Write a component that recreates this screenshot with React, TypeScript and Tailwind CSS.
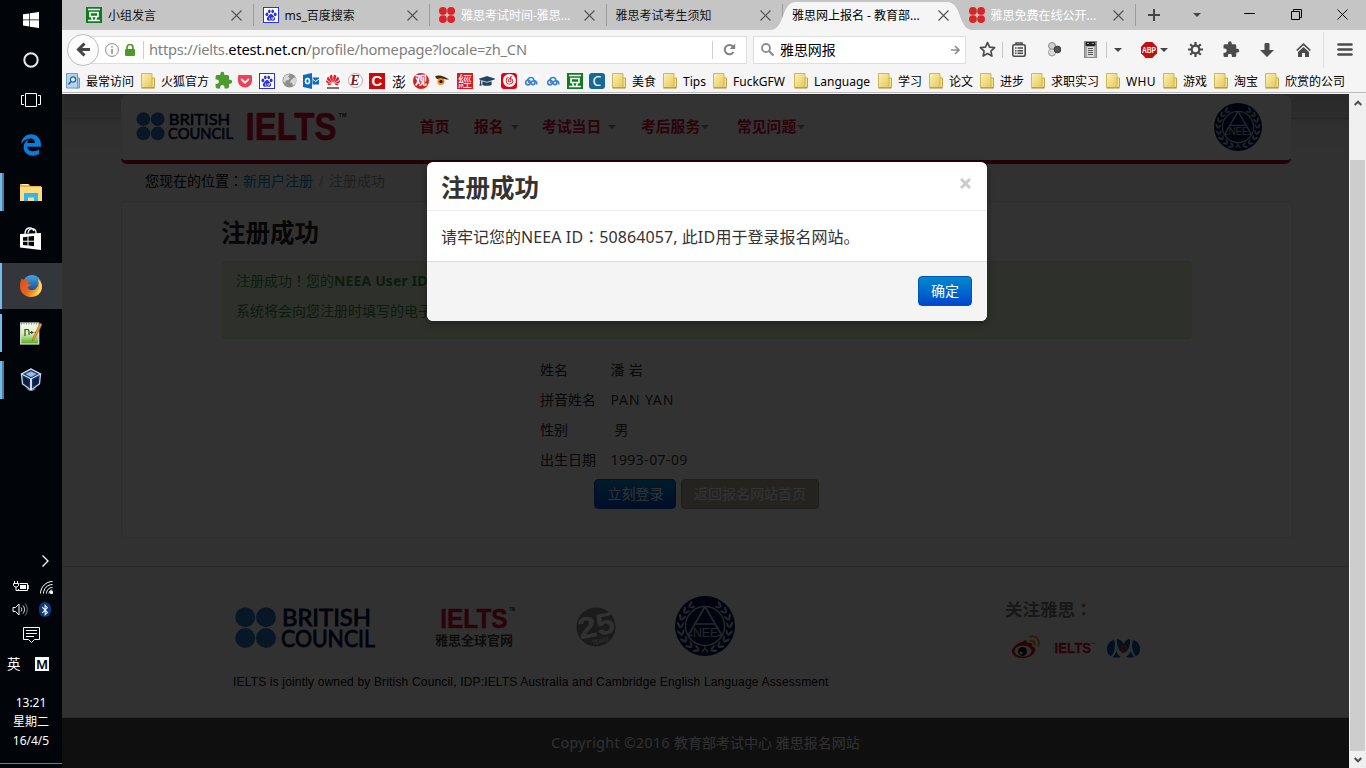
import React from "react";
import { FaEdgeLegacy, FaGetPocket, FaBluetoothB, FaGraduationCap } from "react-icons/fa";
import { MdExtension } from "react-icons/md";
import { SiHuawei, SiNeteasecloudmusic } from "react-icons/si";

const ui = "font-['Noto_Sans','Noto_Sans_CJK_SC',sans-serif]";

/* ---------- shared pieces ---------- */

const Wide = ({ children }: { children: React.ReactNode }) => (
  <span className="font-['Noto_Sans_CJK_TC',sans-serif]" lang="zh-TW">{children}</span>
);

const Cross = () => (
  <svg className="size-[11px]" viewBox="0 0 11 11" fill="none" stroke="#555" strokeWidth="1.2">
    <path d="M.5.5l10 10M10.500.5l-10 10" />
  </svg>
);

const Caret = ({ className = "text-[#444]" }: { className?: string }) => (
  <svg className={`h-1 w-2 ${className}`} viewBox="0 0 8 4"><path d="M0 0h8L4 4z" fill="currentColor" /></svg>
);

const Douban = () => (
  <svg className="size-4" viewBox="0 0 16 16">
    <rect width="16" height="16" fill="#0b7d1f" />
    <path d="M2 2.500h12M4 5.500h8v4H4zM2 13.500h12M5.500 10l1 3M10.500 10l-1 3" stroke="#fff" strokeWidth="1.6" fill="none" />
  </svg>
);

const Baidu = () => (
  <svg className="size-4" viewBox="0 0 16 16">
    <rect x=".5" y=".5" width="15" height="15" fill="#fff" stroke="#2b32e0" />
    <g fill="#2b32e0">
      <ellipse cx="3.900" cy="7.300" rx="1.400" ry="1.900" />
      <ellipse cx="6.300" cy="4.300" rx="1.300" ry="1.900" />
      <ellipse cx="9.700" cy="4.300" rx="1.300" ry="1.900" />
      <ellipse cx="12.200" cy="7.300" rx="1.400" ry="1.900" />
      <path d="M8 7c1.500 0 2 1.600 3.200 2.700 1.800 1.700.8 4.300-1.200 4-1.300-.2-2.700-.2-4 0-2 .3-3-2.300-1.200-4C6 8.600 6.500 7 8 7z" />
    </g>
    <path d="M6.500 10.500v1.800h1M9 10v2.200h1.500V10" stroke="#fff" strokeWidth=".7" fill="none" />
  </svg>
);

const Clover = () => (
  <svg className="size-4" viewBox="0 0 16 16" fill="#d9242a">
    <circle cx="3.900" cy="3.900" r="3.900" /><circle cx="12.100" cy="3.900" r="3.900" />
    <circle cx="3.900" cy="12.100" r="3.900" /><circle cx="12.100" cy="12.100" r="3.900" />
  </svg>
);

const Seal = ({ className }: { className: string }) => (
  <svg className={className} viewBox="0 0 60 60">
    <circle cx="30" cy="30" r="30" fill="#03154d" />
    <circle cx="30" cy="30" r="19.500" fill="none" stroke="#b9c0d4" strokeWidth="1.500" />
    <path d="M30 10.500L13.500 39M30 10.500L46.500 39M20.500 28h19" fill="none" stroke="#b9c0d4" strokeWidth="1.700" />
    <path d="M13.500 39.500h4M43 39.500h3.500" fill="none" stroke="#b9c0d4" strokeWidth="1.300" />
    <text x="18" y="40.500" textLength="25" lengthAdjust="spacingAndGlyphs" fontSize="13" fill="#b9c0d4" fontFamily="Liberation Sans">NEE</text>
    <g fill="#b9c0d4">
      {[34, 52, 70, 88, 106, 124, 142, 160].map((a) => (
        <g key={a}>
          <ellipse cx="30" cy="3.800" rx="3.500" ry="1.200" transform={`rotate(${a} 30 30) rotate(28 30 3.800)`} />
          <ellipse cx="30" cy="7.300" rx="3" ry="1" transform={`rotate(${a} 30 30) rotate(-28 30 7.300)`} />
          <ellipse cx="30" cy="3.800" rx="3.500" ry="1.200" transform={`rotate(${-a} 30 30) rotate(-28 30 3.800)`} />
          <ellipse cx="30" cy="7.300" rx="3" ry="1" transform={`rotate(${-a} 30 30) rotate(28 30 7.300)`} />
        </g>
      ))}
    </g>
    <path d="M27 56l3-4 3 4M30 52v-2" stroke="#b9c0d4" strokeWidth="1.300" fill="none" />
  </svg>
);

const BritishCouncil = ({ className }: { className: string }) => (
  <svg className={`overflow-visible ${className}`} viewBox="0 0 141 42">
    <g fill="#2b76bd">
      <circle cx="10.200" cy="10.200" r="10" /><circle cx="31" cy="10.200" r="10" />
      <circle cx="10.200" cy="31" r="10" /><circle cx="31" cy="31" r="10" />
    </g>
    <g fill="#001047" stroke="#001047" strokeWidth=".9" fontFamily="Lato" fontWeight="400" fontSize="23.500">
      <text x="47" y="19" textLength="89" lengthAdjust="spacingAndGlyphs">BRITISH</text>
      <text x="46" y="39.500" textLength="94" lengthAdjust="spacingAndGlyphs">COUNCIL</text>
    </g>
  </svg>
);

const Ielts = ({ className }: { className: string }) => (
  <svg className={`overflow-visible ${className}`} viewBox="0 0 100 29">
    <text x="-1" y="27.500" textLength="91" lengthAdjust="spacingAndGlyphs" fontFamily="Liberation Sans" fontWeight="700" fontSize="38" fill="#d90d34" stroke="#d90d34" strokeWidth=".7">IELTS</text>
    <text x="92" y="5" textLength="8" lengthAdjust="spacingAndGlyphs" fontFamily="Liberation Sans" fontWeight="700" fontSize="6" fill="#333">TM</text>
  </svg>
);

/* ---------- task bar ---------- */

const Explorer = () => (
  <svg className="h-[19px] w-[22px]" viewBox="0 0 22 19">
    <path d="M0 1h9l1 2h11v15H0z" fill="#e9b83b" />
    <path d="M0 4h22v14H0z" fill="#fbdc82" />
    <path d="M2 1.500h6" stroke="#fff6cf" />
    <path d="M4 10h14v8h-4v-3.500H8V18H4z" fill="#30b6e8" />
  </svg>
);

const Store = () => (
  <svg className="h-[24px] w-[22px]" viewBox="0 0 22 24">
    <path d="M5 7c0-7 7-8 9-3M8 6c1-6 9-6 8 1" fill="none" stroke="#fff" strokeWidth="1.300" />
    <path d="M0 7l21-1v17L0 20.500z" fill="#fff" />
    <path d="M3 10.200l4.500-.5v4H3zM8.500 9.600l5.500-.6v4.700H8.500zM3 14.700h4.500v3.700L3 17.900zM8.500 14.700H14v4.500l-5.500-.7z" fill="#02060c" />
  </svg>
);

const Firefox = () => (
  <svg className="size-6" viewBox="0 0 24 24">
    <defs>
      <linearGradient id="fx" x1="0" y1="0" x2="1" y2=".6"><stop offset="0" stopColor="#d9481d" /><stop offset=".6" stopColor="#e96a22" /><stop offset="1" stopColor="#fcd34a" /></linearGradient>
      <linearGradient id="gl" x1="0" y1="0" x2="0" y2="1"><stop offset="0" stopColor="#3fa8e8" /><stop offset="1" stopColor="#123a80" /></linearGradient>
    </defs>
    <circle cx="13" cy="10.500" r="9.500" fill="url(#gl)" />
    <path d="M2.500 4.500c1 1 2 1.200 3 1 1.500-.5 3-.2 4 .8L8.500 8.500c0 1.500 1.500 1.700 3.500 1.700-1 2-2.500 1.500-3.500 3.300 1 3 6 3.500 8.500 1 2.500-2.500 3-6 2-9.500 3 2 4 5 4 8C23 19 18 23 12 23S1 18.500 1 12.500c0-3 .5-5.500 1.500-8z" fill="url(#fx)" />
    <path d="M19 5c4 3.500 4.500 7.500 2.500 11.500C20 19 17 20.500 15 20.500c4.500-2.500 6.500-8 4-15.500z" fill="#fde06a" opacity=".8" />
  </svg>
);

const NotepadPP = () => (
  <svg className="h-6 w-[22px]" viewBox="0 0 22 24">
    <defs><linearGradient id="np" x1="0" y1="0" x2="0" y2="1"><stop offset="0" stopColor="#f7fbf3" /><stop offset=".5" stopColor="#d8efb5" /><stop offset="1" stopColor="#4cae1c" /></linearGradient></defs>
    <rect x=".7" y="2" width="18" height="21" fill="url(#np)" stroke="#dfe4df" strokeWidth="1.200" />
    <path d="M1 2.500h18" stroke="#8a8f8a" strokeDasharray="1 1.500" strokeWidth="2" />
    <path d="M5 15V8.500h3l1 1.500v4M10 11.500h3.500M14.500 11.500h3M11.700 10v3" stroke="#3b4538" strokeWidth="1.200" fill="none" />
    <path d="M20 2L13 17l-1 3 2.500-2L22 3.500z" fill="#f0a22b" stroke="#a35b16" strokeWidth=".6" />
  </svg>
);

const VBox = () => (
  <svg className="h-6 w-[22px]" viewBox="0 0 22 24">
    <path d="M11 1l9.500 5-1 10L11 22l-8.500-6-1-10z" fill="#16305f" stroke="#c4d6ea" strokeWidth="1.300" />
    <path d="M1.500 6L11 11l9.500-5L11 1z" fill="#24467c" stroke="#dbe7f3" strokeWidth="1.100" />
    <path d="M5.500 6L11 9l5.500-3L11 3.500z" fill="#9dbbdb" />
    <path d="M11 11v11" stroke="#e9f1f8" strokeWidth="1.800" />
    <path d="M3.500 9l5 3v6l-4.500-3zM18.500 9l-5 3v6l4.500-3z" fill="#0a1e42" />
    <path d="M6 20c3 4 7 4 10 0l-5 2.500z" fill="#94abc4" />
  </svg>
);

const TaskItem = ({ children, mark, active }: { children: React.ReactNode; mark?: "one" | "many"; active?: boolean }) => (
  <div className={`mb-px flex h-[46px] items-center ${active ? "bg-[#33363a]" : ""}`}>
    <div className={`flex w-1 ${active ? "h-full" : "h-[38px]"}`}>
      {(mark || active) && <span className="h-full w-[2px] bg-[#76b9ed]" />}
      {mark === "many" && <span className="h-full w-[2px] bg-[#4d7ba3]" />}
    </div>
    <div className="flex flex-1 justify-center pr-[5px]">{children}</div>
  </div>
);

const Taskbar = () => (
  <aside className="flex h-full w-[62px] shrink-0 flex-col bg-[#010409] text-white">
    <div className="flex h-10 items-center justify-center">
      <svg className="size-4" viewBox="0 0 16 16" fill="#fff"><path d="M0 2.300L6.300 1.400v6.100H0zM7 1.300L16 0v7.500H7zM0 8.300h6.300v6.100L0 13.500zM7 8.300h9V16l-9-1.300z" /></svg>
    </div>
    <div className="flex h-10 items-center justify-center">
      <svg className="size-4" viewBox="0 0 16 16"><circle cx="8" cy="8" r="6.700" fill="none" stroke="#e9e9e9" strokeWidth="2" /></svg>
    </div>
    <div className="mb-[2px] flex h-10 items-center justify-center">
      <svg className="h-[14px] w-5" viewBox="0 0 20 14" fill="none" stroke="#fff"><path d="M4.500.5h11v13h-11zM3 2.500H.5v9H3M17 2.500h2.500v9H17" /></svg>
    </div>
    <TaskItem><FaEdgeLegacy className="size-[22px] text-[#0b7bdc]" /></TaskItem>
    <TaskItem mark="many"><Explorer /></TaskItem>
    <TaskItem><Store /></TaskItem>
    <TaskItem active><Firefox /></TaskItem>
    <TaskItem mark="one"><NotepadPP /></TaskItem>
    <TaskItem mark="many"><VBox /></TaskItem>
    <div className="mt-auto flex h-[22px] items-center justify-end pr-3">
      <svg className="h-3 w-[9px]" viewBox="0 0 9 12" fill="none" stroke="#fff" strokeWidth="1.300"><path d="M1.500.5L7 6l-5.500 5.500" /></svg>
    </div>
    <div className="mt-1 flex h-[22px] items-center justify-between pl-[13px] pr-[9px]">
      <svg className="h-3 w-4" viewBox="0 0 16 12" fill="none" stroke="#fff"><path d="M6.500 2.500h8v7h-9V8" /><path d="M14.500 4.500h1.200v3h-1.200" /><path d="M7 4h6v4H7z" fill="#fff" stroke="none" /><path d="M1.500 0v2M4.500 0v2M.5 2.500h5v2L4 6H2L.5 4.500zM3 6v3.500h3" /></svg>
      <svg className="size-[13px]" viewBox="0 0 13 13" fill="none" stroke="#fff"><path d="M.5 12.500C.5 6 6 .5 12.500.5M3.500 12.500c0-5 4-9 9-9M6.500 12.500c0-3.500 2.500-6 6-6M9 12.500c0-2 1.500-3.500 3.500-3.500" /><path d="M10.500 10.500h2v2h-2z" fill="#fff" /></svg>
    </div>
    <div className="flex h-[23px] items-center justify-between pl-3 pr-[11px]">
      <svg className="h-[13px] w-4" viewBox="0 0 16 13" fill="none" stroke="#fff"><path d="M1 4.500h2.500L7 1v11L3.500 8.500H1z" /><path d="M9 4.500c1 1.200 1 2.800 0 4M11 2.500c2 2.500 2 5.500 0 8" /><path d="M13 .5c3 3.500 3 8.500 0 12" stroke="#777" /></svg>
      <span className="flex h-[15px] w-3 items-center justify-center rounded-full bg-[#0c3a7c]"><FaBluetoothB className="size-3" /></span>
    </div>
    <div className="mb-1 flex h-[28px] items-center justify-center">
      <svg className="h-4 w-[17px]" viewBox="0 0 17 16" fill="none" stroke="#fff"><path d="M.5.5h16v12h-5l-3 3-3-3h-5zM3 3.500h11M3 6.500h11M3 9.500h8" /></svg>
    </div>
    <div className="flex h-[22px] items-center justify-between pl-[7px] pr-[13px] text-[13.5px] leading-4">
      <span>英</span>
      <span className="flex size-[14px] items-center justify-center bg-white text-[13px] leading-[14px] font-semibold text-black">M</span>
    </div>
    <div className="mt-[18px] flex h-[69px] flex-col text-center text-[12px] leading-[19px]">
      <span>13:21</span><span>星期二</span><span>16/4/5</span>
    </div>
    <div className="mt-px h-[5px] border-t border-[#777]" />
  </aside>
);

/* ---------- browser chrome ---------- */

const Tab = ({ icon, label, light, last }: { icon?: React.ReactNode; label: string; light?: boolean; last?: boolean }) => (
  <div className={`flex h-[30px] w-[176.5px] shrink-0 items-center ${last ? "pl-[9px]" : "pl-[9px]"}`}>
    {icon && <span className="mr-[6px] shrink-0">{icon}</span>}
    <span className={`flex-1 overflow-hidden pt-[2px] text-[12px] leading-5 whitespace-nowrap ${light ? "text-white" : "text-[#111]"}`}>{label}</span>
    <Cross />
    <span className="ml-[11px] h-[22px] w-px bg-[#9c9c9c]" />
  </div>
);

const TabBar = () => (
  <div className="flex h-[30px] shrink-0 items-center bg-[#c5c5c5] pl-[15px]">
    <Tab icon={<Douban />} label="小组发言" />
    <Tab icon={<Baidu />} label="ms_百度搜索" />
    <Tab icon={<Clover />} label="雅思考试时间-雅思..." light />
    <Tab label="雅思考试考生须知" />
    <div className="relative flex h-[30px] w-[176.5px] shrink-0 items-center pr-[10px] pl-[9px]">
      <svg className="absolute top-0 -left-[12px] h-[30px] w-[201px]" viewBox="0 0 201 30">
        <path d="M0 30C14 29 10 2 25 2h151C191 2 187 29 201 30z" fill="#f5f5f5" />
      </svg>
      <span className="relative flex-1 overflow-hidden pt-[2px] text-[12px] leading-5 whitespace-nowrap text-black">雅思网上报名 - 教育部...</span>
      <span className="relative mr-px"><Cross /></span>
    </div>
    <Tab icon={<Clover />} label="雅思免费在线公开..." light last />
    <svg className="ml-3 size-3" viewBox="0 0 12 12" stroke="#444" strokeWidth="2"><path d="M6 0v12M0 6h12" /></svg>
    <span className="ml-[33px]"><Caret /></span>
    <div className="ml-auto flex items-center pr-[18px] pb-[2px]">
      <svg className="h-3 w-[11px]" viewBox="0 0 11 12" stroke="#000"><path d="M0 5.500h11" /></svg>
      <svg className="ml-9 size-[11px]" viewBox="0 0 11 11" stroke="#000" fill="none"><path d="M.5 2.500h8v8h-8zM2.500 2.500v-2h8v8h-2" /></svg>
      <svg className="ml-[35px] size-[11px]" viewBox="0 0 11 11" stroke="#000"><path d="M.5.5l10 10M10.500.5l-10 10" /></svg>
    </div>
  </div>
);

const Slot = ({ w, children }: { w: string; children?: React.ReactNode }) => (
  <span className={`flex shrink-0 items-center justify-center ${w}`}>{children}</span>
);

const NavBar = () => (
  <div className="flex h-[39px] shrink-0 items-center pl-[5px]">
    <span className="relative z-10 flex size-8 shrink-0 items-center justify-center rounded-full border border-[#bdbdbd] bg-[#fcfcfc]">
      <svg className="h-[15px] w-[14px]" viewBox="0 0 14 15" fill="none" stroke="#444" strokeWidth="3"><path d="M14 7.500H3M8.500 1.500l-6 6 6 6" /></svg>
    </span>
    <div className="-ml-4 flex h-7 w-[664px] shrink-0 items-center border border-[#dedede] bg-white pl-[21px]">
      <svg className="size-[14px]" viewBox="0 0 14 14" fill="none" stroke="#8c8c8c"><circle cx="7" cy="7" r="6.400" /><path d="M7 6v5M7 3v1.500" strokeWidth="1.500" /></svg>
      <svg className="ml-[6px] h-3 w-[10px]" viewBox="0 0 10 12"><path d="M2 6V3.500a3 3 0 016 0V6" fill="none" stroke="#4c9b26" strokeWidth="1.700" /><rect y="5" width="10" height="7" rx="1" fill="#4c9b26" /></svg>
      <span className="ml-2 h-[18px] w-px bg-[#cfcfcf]" />
      <span className="ml-[5px] flex-1 pb-px text-[14.67px] leading-5 tracking-[-0.23px] whitespace-nowrap text-[#808080]">https://ielts.<span className="text-black">etest.net.cn</span>/profile/homepage?locale=zh_CN</span>
      <span className="h-[18px] w-px bg-[#cfcfcf]" />
      <Slot w="w-[33px]"><svg className="size-[13px]" viewBox="0 0 13 13"><path d="M10.500 9A4.700 4.700 0 1110 3.500" fill="none" stroke="#808080" strokeWidth="2" /><path d="M12.200.5v5.500H6.700z" fill="#808080" /></svg></Slot>
    </div>
    <div className="ml-[6px] flex h-7 w-[213px] shrink-0 items-center border border-[#dedede] bg-white pl-[7px]">
      <svg className="size-[13px]" viewBox="0 0 13 13" fill="none" stroke="#8c8c8c" strokeWidth="1.800"><circle cx="5" cy="5" r="4" /><path d="M8 8l4.500 4.500" strokeWidth="2.200" /></svg>
      <span className="ml-[6px] flex-1 text-[14px] leading-5 tracking-[-0.1px] text-black">雅思网报</span>
      <svg className="mr-[5px] h-[10px] w-[9px]" viewBox="0 0 9 10" fill="none" stroke="#8c8c8c" strokeWidth="1.600"><path d="M0 5h8M4 1l4 4-4 4" /></svg>
    </div>
    <Slot w="w-9 pl-[6px]"><svg className="size-[17px]" viewBox="0 0 17 17" fill="none" stroke="#4b4b4b" strokeWidth="1.700" strokeLinejoin="round"><path d="M8.500 1.500l2.100 4.600 5 .6-3.700 3.400 1 5-4.400-2.500-4.400 2.500 1-5L1.400 6.700l5-.6z" /></svg></Slot>
    <span className="h-[16px] w-px bg-[#c8c8c8]" />
    <Slot w="w-[31px]"><svg className="h-[15px] w-[14px]" viewBox="0 0 14 15" fill="none" stroke="#4b4b4b" strokeWidth="1.600"><rect x=".8" y="2.800" width="12.400" height="11.400" rx="1.500" /><path d="M4 2.500V1h6v1.500M3 6h1.500M5.500 6H11M3 8.700h1.500M5.500 8.700H11M3 11.300h1.500M5.500 11.300H11" /></svg></Slot>
    <Slot w="w-10"><svg className="h-[15px] w-[14px]" viewBox="0 0 14 15"><circle cx="5" cy="4" r="3.500" fill="#cfcfcf" stroke="#8a8a8a" /><circle cx="5" cy="10.500" r="3.500" fill="#d8d8d8" stroke="#999" /><circle cx="10.500" cy="7.500" r="3.300" fill="#555" stroke="#333" /></svg></Slot>
    <Slot w="w-[32px]"><svg className="h-[17px] w-[13px]" viewBox="0 0 13 17"><rect x=".5" y=".5" width="12" height="16" fill="#aaa" stroke="#888" /><rect x="1.500" y="1" width="10" height="4" rx="1" fill="#222" /><path d="M3 2.500h2M8 2.500h2" stroke="#999" /><rect x="3" y="6" width="7" height="10" fill="#ddd" /><path d="M4 7.500h5M4 9.500h5M4 11.500h5M4 13.500h5" stroke="#555" /></svg></Slot>
    <span className="h-[16px] w-px bg-[#c8c8c8]" />
    <Slot w="w-[22px]"><Caret /></Slot>
    <Slot w="w-[40px]">
      <svg className="size-4" viewBox="0 0 16 16"><path d="M4.700 0h6.600L16 4.700v6.600L11.300 16H4.700L0 11.300V4.700z" fill="#c70d0d" /><text x="1" y="11" textLength="14" lengthAdjust="spacingAndGlyphs" fontFamily="Liberation Sans" fontWeight="700" fontSize="8.500" fill="#fff">ABP</text></svg>
    </Slot>
    <span className="ml-[-9px]"><Caret /></span>
    <Slot w="w-[54px]"><svg className="size-[15px]" viewBox="0 0 15 15" fill="none" stroke="#4b4b4b"><circle cx="7.500" cy="7.500" r="3.800" strokeWidth="2.200" /><path d="M7.500 0v3M7.500 12v3M0 7.500h3M12 7.500h3M2.200 2.200l2.100 2.100M10.700 10.700l2.100 2.100M12.800 2.200l-2.100 2.100M4.300 10.700l-2.100 2.100" strokeWidth="2.200" /></svg></Slot>
    <Slot w="w-[18px]"><MdExtension className="size-[19px] text-[#4b4b4b]" /></Slot>
    <Slot w="w-[54px]"><svg className="size-[14px]" viewBox="0 0 14 14" fill="#4b4b4b"><path d="M4.500 1.200Q4.500 0 5.700 0h2.600Q9.500 0 9.500 1.200V7H14l-7 7-7-7h4.500z" /></svg></Slot>
    <Slot w="w-[18px]"><svg className="h-[14px] w-[15px]" viewBox="0 0 15 14"><path d="M.7 7.500l6.800-6.300 6.800 6.300" fill="none" stroke="#4b4b4b" strokeWidth="1.700" /><path d="M7.500 4L13 9v5H9v-4H6v4H2V9z" fill="#4b4b4b" /></svg></Slot>
    <span className="ml-[11px] h-[36px] w-px bg-[#dcdcdc]" />
    <Slot w="w-[41px]"><svg className="h-[13px] w-4" viewBox="0 0 16 13" stroke="#4b4b4b" strokeWidth="2.600" strokeLinecap="round"><path d="M1.500 1.500h13M1.500 6.500h13M1.500 11.500h13" /></svg></Slot>
  </div>
);

const Folder = () => (
  <svg className="h-4 w-[15px]" viewBox="0 0 15 16">
    <defs><linearGradient id="fo" x1="0" y1="0" x2="1" y2="1"><stop offset="0" stopColor="#fdf3b4" /><stop offset="1" stopColor="#e5c75c" /></linearGradient></defs>
    <path d="M9 5h4.500v9.500H9z" fill="#f3df86" stroke="#c4a648" />
    <path d="M.5.5h10.500v14H.5z" fill="url(#fo)" stroke="#d0b658" />
    <path d="M.5 15h13" stroke="#a58d3f" />
  </svg>
);

const Entry = ({ w, label, tight }: { w: string; label: string; tight?: string }) => (
  <span className={`flex shrink-0 items-center gap-[5px] ${w}`}>
    <Folder />
    <span className={`pt-[2px] text-[12px] leading-4 whitespace-nowrap ${tight ?? ""}`}>{label}</span>
  </span>
);

const Cloud = () => (
  <svg className="size-[14px]" viewBox="0 0 14 14" fill="none" strokeWidth="1.700"><rect width="14" height="14" fill="#fafafa" /><circle cx="4" cy="8.500" r="2.300" stroke="#2f86dd" /><path d="M3.500 6.300c1.500-4 6-3.500 6.500.2 2 .5 3 2 2.500 4" stroke="#2f86dd" /><circle cx="9" cy="8.800" r="1.800" stroke="#2f86dd" /><path d="M4 8.500l2-1.500" stroke="#e24545" /></svg>
);

const Bookmarks = () => (
  <div className="flex h-[24px] shrink-0 items-center border-b border-[#b9b9b9] pl-1 text-black">
    <span className="flex w-[75px] shrink-0 items-center gap-[5px]">
      <svg className="h-4 w-[15px]" viewBox="0 0 15 16"><path d="M9 5h4.500v10H9z" fill="#a9cbe2" stroke="#6c9cbd" /><path d="M.5.5h11v14.500H.5z" fill="#b2d4ec" stroke="#6b9dc2" /><circle cx="7" cy="6.500" r="2.600" fill="#dff0fb" stroke="#2f6590" strokeWidth="1.300" /><path d="M5 8.500L2.500 11.500" stroke="#2f6590" strokeWidth="1.800" /></svg>
      <span className="pt-[2px] text-[12px] leading-4">最常访问</span>
    </span>
    <Entry w="w-[71px]" label="火狐官方" />
    <Slot w="w-[22px]"><MdExtension className="size-[19px] text-[#4f9a33]" /></Slot>
    <Slot w="w-[22px]"><FaGetPocket className="size-4 text-[#ee4056]" /></Slot>
    <Slot w="w-[22px]"><Baidu /></Slot>
    <Slot w="w-[22px]"><svg className="size-[15px]" viewBox="0 0 15 15"><circle cx="7.500" cy="7.500" r="7" fill="#8e8e8e" /><path d="M2 4c2-2 4-3 5.500-2.500L6 4l2 1-1.500 2L4 7.500 3 10 1 8zM9 7l4-3 1.500 3-1 4-2.500 1.500-1-2.500-2-.5z" fill="#d8d8d8" /></svg></Slot>
    <Slot w="w-[22px]"><svg className="size-4" viewBox="0 0 16 16"><path d="M0 2l9-2v16l-9-2z" fill="#0a6cc4" /><ellipse cx="4.500" cy="8" rx="2" ry="2.600" fill="none" stroke="#fff" strokeWidth="1.500" /><path d="M9.500 4.500H16v7H9.500z" fill="#0a6cc4" /><path d="M9.500 6l3.200 2.500L16 6" stroke="#fff" fill="none" /></svg></Slot>
    <Slot w="w-[22px]"><span className="flex size-4 flex-col items-center bg-white"><SiHuawei className="size-[14px] text-[#e3202c]" /><span className="h-[2px] w-3 bg-[#777]" /></span></Slot>
    <Slot w="w-[22px]"><span className="flex size-[15px] items-center justify-center rounded-full border border-[#c9a0a4] bg-white font-['Liberation_Serif',serif] text-[14px] leading-3 font-bold text-[#7a1820] italic">E</span></Slot>
    <Slot w="w-[22px]"><span className="flex size-4 items-center justify-center bg-[#cc0a0a] font-['Liberation_Sans',sans-serif] text-[15px] leading-4 font-bold text-white">C</span></Slot>
    <Slot w="w-[22px]"><span className="flex size-4 items-center justify-center bg-white font-['Noto_Sans_CJK_SC',sans-serif] text-[14px] leading-4 text-black">澎</span></Slot>
    <Slot w="w-[22px]"><span className="flex size-4 items-center justify-center rounded-full bg-[#d4201c] text-[12px] leading-4 font-bold text-white">观</span></Slot>
    <Slot w="w-[22px]"><svg className="h-[13px] w-4" viewBox="0 0 16 13"><path d="M0 2c4-2 9 0 15 3l-5 .5C10 9 8 12 5.500 12S1 9 2 5.500z" fill="#f2d9a6" /><path d="M0 2.500c4-2 8-.5 14 3-4 0-8-2-12-.5" fill="#3a2a1a" /><circle cx="6" cy="7.500" r="3.300" fill="#e88b10" /><circle cx="6" cy="7.500" r="1.600" fill="#111" /></svg></Slot>
    <Slot w="w-[22px]"><span className="flex size-4 items-center justify-center bg-[#e3171b] text-[14px] leading-4 text-white">經</span></Slot>
    <Slot w="w-[22px]"><FaGraduationCap className="size-4 text-[#26435f]" /></Slot>
    <Slot w="w-[22px]"><span className="flex size-4 items-center justify-center rounded-[3px] bg-[#e60012]"><SiNeteasecloudmusic className="size-[13px] text-white" /></span></Slot>
    <Slot w="w-[22px]"><Cloud /></Slot>
    <Slot w="w-[22px]"><Cloud /></Slot>
    <Slot w="w-[22px]"><Douban /></Slot>
    <Slot w="w-[22px]"><span className="flex size-4 items-center justify-center rounded-[3px] bg-[#176a96] text-[14px] leading-4 text-white">C</span></Slot>
    <span className="w-1 shrink-0" />
    <Entry w="w-[51px]" label="美食" />
    <Entry w="w-[50px]" label="Tips" />
    <Entry w="w-[81px]" label="FuckGFW" />
    <Entry w="w-[84px]" label="Language" />
    <Entry w="w-[51px]" label="学习" />
    <Entry w="w-[51px]" label="论文" />
    <Entry w="w-[51px]" label="进步" />
    <Entry w="w-[75px]" label="求职实习" />
    <Entry w="w-[57px]" label="WHU" tight="tracking-[0.3px]" />
    <Entry w="w-[51px]" label="游戏" />
    <Entry w="w-[51px]" label="淘宝" />
    <Entry w="w-[81px]" label="欣赏的公司" />
  </div>
);

/* ---------- site ---------- */

const MenuItem = ({ label, w, gap }: { label: string; w: string; gap?: string }) => (
  <span className={`flex shrink-0 items-center text-[14.8px] leading-5 font-bold whitespace-nowrap text-[#d90d34] ${w}`}>
    {label}
    {gap && <span className={`pt-[2px] ${gap}`}><Caret className="text-[#888]" /></span>}
  </span>
);

const Row = ({ label, value, pad }: { label: string; value: string; pad?: string }) => (
  <div className="flex h-[30px] items-center text-[14px] leading-5">
    <span className="w-[70.5px] text-[#222]">{label}</span>
    <span className={`text-[#333] ${pad ?? ""}`}>{value}</span>
  </div>
);

const Site = () => (
  <div className="flex h-full w-full flex-col bg-[linear-gradient(to_bottom,#cfcfcf_0px,#dcdcdc_24px,#c8c8c8_24px,#c8c8c8_25px,#ebebeb_26px,#f3f3f3_60px,#f3f3f3_100%)]">
    <header className="mt-px ml-[59px] flex h-[69px] w-[1170px] shrink-0 items-center rounded-[6px] border-b-4 border-[#b3092b] bg-[#fdfdfd] pl-[15px]">
      <BritishCouncil className="mb-[3px] h-[29px] w-[98px]" />
      <Ielts className="mb-[3px] ml-3 h-[29px] w-[101px]" />
      <nav className="ml-[73px] flex pb-[3px]">
        <MenuItem label="首页" w="w-[54px]" />
        <MenuItem label="报名" w="w-[68px]" gap="ml-[7px]" />
        <MenuItem label="考试当日" w="w-[99px]" gap="ml-[7px]" />
        <MenuItem label="考后服务" w="w-[96px]" gap="ml-px" />
        <MenuItem label="常见问题" w="w-[80px]" gap="ml-px" />
      </nav>
      <Seal className="mr-[29px] mb-[2px] ml-auto size-[48px]" />
    </header>
    <div className="mb-[2px] flex h-[35px] shrink-0 items-center pb-[2px] pl-[83px] text-[14px] leading-5 text-black">
      <span>您现在的位置<Wide>：</Wide></span>
      <span className="text-[#0088cc]">新用户注册</span>
      <span className="w-[16px] text-center text-[#bbb]">/</span>
      <span className="text-[#999]">注册成功</span>
    </div>
    <main className="ml-[59px] h-[337px] w-[1172px] shrink-0 rounded-[4px] border border-[#dedede] bg-[#fbfbfb] pl-[100px]">
      <h1 className="-ml-px h-[59px] pt-[1px] text-[24.5px] leading-[60px] font-bold text-[#222]">注册成功</h1>
      <div className="flex h-[78px] w-[970px] flex-col rounded-[4px] border border-[#d6e9c6] bg-[#dff0d8] pt-[3px] pl-[13px] text-[14px] leading-[30px] text-[#468847]">
        <span>注册成功<Wide>！</Wide>您的<b className="tracking-[0.15px]">NEEA User ID</b></span>
        <span>系统将会向您注册时填写的电子邮箱发送一封邮件。</span>
      </div>
      <div className="mt-4 ml-[318px]">
        <Row label="姓名" value="潘 岩" pad="tracking-[0.3px]" />
        <Row label="拼音姓名" value="PAN YAN" pad="tracking-[0.85px]" />
        <Row label="性别" value="男" pad="pl-1" />
        <Row label="出生日期" value="1993-07-09" pad="tracking-[0.42px]" />
      </div>
      <div className="mt-1 ml-[372px] flex gap-[5px] text-[14px] leading-5 text-white">
        <button className="h-[30px] w-[82px] rounded-[4px] border border-[#0055bb] bg-linear-to-b from-[#0088cc] to-[#0044cc] pl-px">立刻登录</button>
        <button className="h-[30px] w-[138px] rounded-[4px] border border-[#938f84] bg-[#b2aea2]">返回报名网站首页</button>
      </div>
    </main>
    <footer className="mt-7 flex h-[152px] shrink-0 justify-between border-t border-b border-[#d2d2d2] bg-[#f5f5f5] pl-[171px]">
      <div>
        <div className="flex h-[104px] items-start pt-[29px] pl-[2px]">
          <BritishCouncil className="mt-[11px] h-[42px] w-[141px]" />
          <div className="mt-[10px] ml-[59px] w-[80px]">
            <Ielts className="ml-[6px] h-[24px] w-[74px]" />
            <div className="text-[13px] leading-[20px] font-semibold whitespace-nowrap text-[#444]">雅思全球官网</div>
          </div>
          <svg className="mt-[11px] ml-[61px] size-10 overflow-visible" viewBox="0 0 40 40">
            <circle cx="20" cy="20" r="19.500" fill="#858585" />
            <g transform="rotate(-12 20 20)">
              <text x="2" y="29" textLength="37" lengthAdjust="spacingAndGlyphs" fontFamily="Liberation Sans" fontWeight="700" fontSize="30" fill="#f5f5f5">25</text>
              <text x="13" y="36.500" textLength="17" lengthAdjust="spacingAndGlyphs" fontFamily="Liberation Sans" fontWeight="700" fontSize="6" fill="#e0e0e0">YEARS</text>
            </g>
          </svg>
          <Seal className="ml-[59px] size-[60px]" />
        </div>
        <p className="pt-px font-['Liberation_Sans',sans-serif] text-[12px] leading-5 tracking-[0.17px] whitespace-nowrap text-black">IELTS is jointly owned by British Council, IDP:IELTS Australia and Cambridge English Language Assessment</p>
      </div>
      <div className="w-[344px] pt-[28px]">
        <div className="text-[17.5px] leading-7 font-bold text-[#777]">关注雅思<Wide>：</Wide></div>
        <div className="mt-3 ml-[6px] flex h-[26px] items-center">
          <svg className="h-[26px] w-[30px]" viewBox="0 0 30 26">
            <path d="M11 7c3-3 6-2 5 1 4-1 6 0 5 3 3 1 4 3 3 5-2 5-7 7-13 7C5 23 1 20 1 16c0-3 5-8 10-9z" fill="#d01018" />
            <ellipse cx="12" cy="16" rx="8.500" ry="5.500" fill="#f5f5f5" /><circle cx="11.500" cy="16.500" r="4.500" fill="#111" /><circle cx="10" cy="18" r="1.500" fill="#f5f5f5" />
            <path d="M19 6c3-1 5 1 4.500 4M19 1.500c6-1.500 10 3 8.500 9" fill="none" stroke="#e69a10" strokeWidth="2" strokeLinecap="round" />
          </svg>
          <Ielts className="ml-[14px] h-4 w-[40px]" />
          <svg className="ml-[12px] h-[19px] w-[33px]" viewBox="0 0 33 19">
            <path d="M7 .5C-2 4-2 14 4 17.500 8 13 9 7 7 .5zM26 .5c9 3.500 9 13.500 3 17-4-4.500-5-10.500-3-17zM10 0c3 .5 5.500 2 6 4-2 3-2 7-.5 10C11 11 9.500 6 10 0zM23 0c-3 .5-5.500 2-6 4 2 3 2 7 .5 10C22 11 23.500 6 23 0zM5.500 18C8 16 8.500 14 9.300 12c1 3 2.500 5 4.700 6-3 1-6 1-8.500 0zM19 18c2.500-2 4-4 4.700-6 .8 2 1.800 4 3.800 6-3 1-6 1-8.500 0z" fill="#0059a8" />
            <ellipse cx="16.500" cy="9" rx="2.300" ry="5" fill="#d81e1e" />
          </svg>
        </div>
      </div>
    </footer>
    <div className="flex flex-1 items-center justify-center bg-[#4c4c50] text-[14px] leading-5 whitespace-pre text-[#f0f0f0]"><span className="tracking-[0.45px]">Copyright ©2016 </span>教育部考试中心 雅思报名网站</div>
  </div>
);

const Modal = () => (
  <div className="absolute top-[68px] left-[365px] flex h-[159px] w-[560px] flex-col overflow-hidden rounded-[6px] bg-white text-[#333] shadow-[0_3px_7px_rgba(0,0,0,0.3)]">
    <div className="flex h-[49px] shrink-0 items-center justify-between border-b border-[#eee] pr-[16px] pb-[1px] pl-[14px]">
      <h3 className="mt-1 text-[24.5px] leading-8 font-bold">注册成功</h3>
      <svg className="mb-[5px] size-[11px]" viewBox="0 0 11 11" stroke="#ccc" strokeWidth="3"><path d="M1 1l9 9M10 1l-9 9" /></svg>
    </div>
    <p className="h-[50px] shrink-0 pl-[14px] text-[16px] leading-[50px] whitespace-nowrap">请牢记您的<span className="tracking-[0.1px]">NEEA ID</span><Wide>：</Wide><span className="tracking-[0.1px]">50864057, </span>此<span className="tracking-[0.2px]">ID</span>用于登录报名网站。</p>
    <div className="flex flex-1 justify-end border-t border-[#ddd] bg-[#f4f4f4] pt-[14px] pr-[15px]">
      <button className="h-[30px] w-[54px] rounded-[4px] border border-[#0055bb] bg-linear-to-b from-[#0088cc] to-[#0044cc] text-[14px] leading-5 text-white">确定</button>
    </div>
  </div>
);

const Scrollbar = () => (
  <div className="flex w-[17px] shrink-0 flex-col items-center bg-[#f0f0f0]">
    <svg className="mt-[6px] h-[6px] w-2" viewBox="0 0 8 6" fill="none" stroke="#505050" strokeWidth="2"><path d="M.7 5L4 1.700 7.300 5" /></svg>
    <div className="mt-[54px] h-[591px] w-[15px] bg-[#cdcdcd]" />
    <svg className="mt-[6px] h-[6px] w-2" viewBox="0 0 8 6" fill="none" stroke="#505050" strokeWidth="2"><path d="M.7 1L4 4.300 7.300 1" /></svg>
  </div>
);

export default function App() {
  return (
    <div className={`flex h-[768px] w-[1366px] overflow-hidden ${ui}`} lang="zh-CN">
      <Taskbar />
      <div className="flex w-[1304px] flex-col bg-[#f5f5f5]">
        <TabBar />
        <NavBar />
        <Bookmarks />
        <div className="mt-px flex h-[674px] shrink-0">
          <div className="relative w-[1287px] shrink-0">
            <Site />
            <div className="absolute inset-0 bg-black/80" />
            <Modal />
          </div>
          <Scrollbar />
        </div>
      </div>
    </div>
  );
}
